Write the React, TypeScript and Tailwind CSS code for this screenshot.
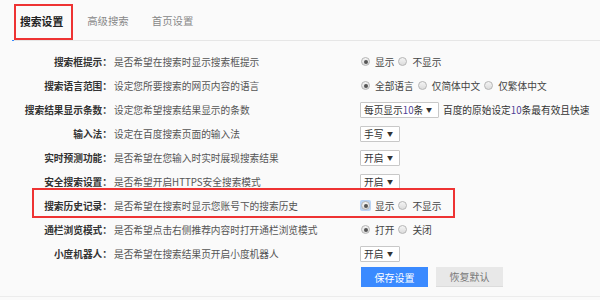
import React from "react";

const font = { fontFamily: '"Noto Sans CJK SC", "Microsoft YaHei", sans-serif' };

function Radio({ checked, focus }: { checked?: boolean; focus?: boolean }) {
  return (
    <span
      className={`inline-flex items-center justify-center w-[11px] h-[11px] rounded-[2px] ${
        focus ? "bg-[#b9d3f5]" : ""
      }`}
    >
      <span className="inline-flex items-center justify-center w-[9px] h-[9px] rounded-full border border-[#b5b5b5] bg-gradient-to-b from-[#f4f4f4] to-[#dcdcdc]">
        {checked && <span className="w-[4px] h-[4px] rounded-full bg-[#555]" />}
      </span>
    </span>
  );
}

function Radios({ items, focus }: { items: string[]; focus?: boolean }) {
  return (
    <div className="flex items-center text-[#444]">
      {items.map((t, i) => (
        <span key={t} className="flex items-center">
          <Radio checked={i === 0} focus={focus && i === 0} />
          <span className="ml-[4px] mr-[3px]">{t}</span>
        </span>
      ))}
    </div>
  );
}

function Select({ children, w }: { children: React.ReactNode; w: string }) {
  return (
    <span
      className={`${w} h-[16px] flex items-center justify-between bg-white border border-[#c8c8c8] rounded-[1px] pl-[3px] pr-[6px] text-[#333]`}
    >
      <span>{children}</span>
      <span className="text-[6px] leading-none">▼</span>
    </span>
  );
}

const Num = ({ v }: { v: string }) => <span className="text-[#4f3f96]">{v}</span>;

type Row = { label: string; desc: string; control: React.ReactNode };

export default function App() {
  const rows: Row[] = [
    { label: "搜索框提示：", desc: "是否希望在搜索时显示搜索框提示", control: <Radios items={["显示", "不显示"]} /> },
    { label: "搜索语言范围：", desc: "设定您所要搜索的网页内容的语言", control: <Radios items={["全部语言", "仅简体中文", "仅繁体中文"]} /> },
    {
      label: "搜索结果显示条数：",
      desc: "设定您希望搜索结果显示的条数",
      control: (
        <div className="flex items-center">
          <Select w="w-[79px]">
            每页显示<Num v="10" />条
          </Select>
          <span className="ml-[4px] text-[#333]">
            百度的原始设定<Num v="10" />条最有效且快速
          </span>
        </div>
      ),
    },
    { label: "输入法：", desc: "设定在百度搜索页面的输入法", control: <Select w="w-[40px]">手写</Select> },
    { label: "实时预测功能：", desc: "是否希望在您输入时实时展现搜索结果", control: <Select w="w-[40px]">开启</Select> },
    { label: "安全搜索设置：", desc: "是否希望开启HTTPS安全搜索模式", control: <Select w="w-[40px]">开启</Select> },
    { label: "搜索历史记录：", desc: "是否希望在搜索时显示您账号下的搜索历史", control: <Radios items={["显示", "不显示"]} focus /> },
    { label: "通栏浏览模式：", desc: "是否希望点击右侧推荐内容时打开通栏浏览模式", control: <Radios items={["打开", "关闭"]} /> },
    { label: "小度机器人：", desc: "是否希望在搜索结果页开启小度机器人", control: <Select w="w-[40px]">开启</Select> },
  ];

  return (
    <div className="relative w-[600px] h-[300px] bg-[#fafafa] overflow-hidden text-[9.7px]" style={font}>
      {/* tabs */}
      <div className="flex items-end h-[41px] ml-[12px] border-b border-[#e6e6e6]">
        <div className="relative flex items-center h-[40px] pt-[2px] pl-[8px] pr-[24px] text-[10.8px] font-bold text-[#222]">
          搜索设置
          <span className="absolute left-0 bottom-[-1px] w-[2px] h-[1px] bg-[#3388ff]" />
        </div>
        <div className="flex items-center h-[40px] pt-[2px] pr-[23px] text-[10.4px] text-[#888]">高级搜索</div>
        <div className="flex items-center h-[40px] pt-[2px] text-[10.4px] text-[#888]">首页设置</div>
      </div>

      {/* rows */}
      <div className="flex flex-col mt-[9px]">
        {rows.map((r) => (
          <div key={r.label} className="grid grid-cols-[112px_248px_1fr] items-center h-[24px]">
            <span className="text-right font-bold text-[#333] whitespace-nowrap">{r.label}</span>
            <span className="pl-[2px] text-[#555] whitespace-nowrap">{r.desc}</span>
            <div className="flex items-center">{r.control}</div>
          </div>
        ))}
        <div className="flex gap-[8px] ml-[361px] mt-[1px]">
          <button className="w-[67px] h-[20px] bg-[#3a8aff] text-white text-[10px]">保存设置</button>
          <button className="w-[67px] h-[20px] bg-[#e8e8e8] border-b border-[#dcdcdc] text-[#777] text-[10px]">恢复默认</button>
        </div>
      </div>

      <div className="absolute left-0 right-0 top-[296px] h-[1px] bg-[#ececec]" />

      {/* red annotation boxes */}
      <div className="absolute left-[14px] top-[4px] w-[59px] h-[36px] border-2 border-[#ee3333]" />
      <div className="absolute left-[32px] top-[188px] w-[423px] h-[30px] border-2 border-[#ee3333]" />
    </div>
  );
}
